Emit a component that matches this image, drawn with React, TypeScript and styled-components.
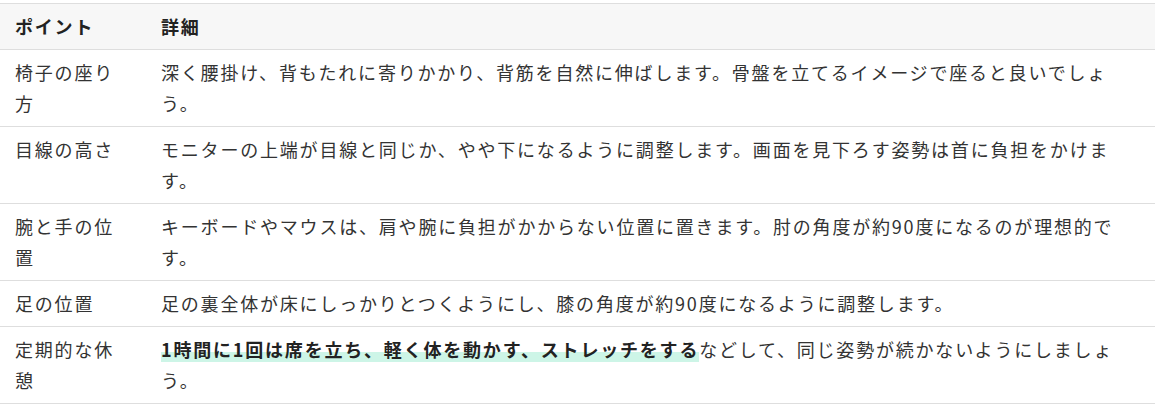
import React from "react";
import styled, { createGlobalStyle } from "styled-components";

const Global = createGlobalStyle`
  html, body { margin: 0; padding: 0; background: #ffffff; }
  body { font-family: "Noto Sans CJK JP", "Noto Sans", sans-serif; color: #333333; }
`;

const Wrap = styled.div`
  padding-top: 3px;
  width: 1155px;
`;

const Table = styled.table`
  width: 100%;
  border-collapse: collapse;
  table-layout: fixed;
  font-size: 18px;
  letter-spacing: 1.8px;
  line-height: 31px;
  border-top: 1px solid #dedede;
`;

const Col = styled.col<{ $w?: number }>`
  width: ${(p) => (p.$w ? `${p.$w}px` : "auto")};
`;

const HeadRow = styled.tr`
  background: #f7f7f7;
  border-bottom: 1px solid #dedede;
`;

const HeadCell = styled.th`
  text-align: left;
  font-weight: 700;
  color: #222222;
  padding: 7px 15px;
  vertical-align: top;
`;

const Row = styled.tr`
  border-bottom: 1px solid #dedede;
`;

const Cell = styled.td`
  padding: 7px 15px;
  vertical-align: top;
  color: #333333;
`;

const Mark = styled.strong`
  font-weight: 700;
  color: #222222;
  background: linear-gradient(transparent 60%, #cdf5e7 60%);
`;

type Item = { point: string; detail: React.ReactNode };

const items: Item[] = [
  {
    point: "椅子の座り方",
    detail:
      "深く腰掛け、背もたれに寄りかかり、背筋を自然に伸ばします。骨盤を立てるイメージで座ると良いでしょう。",
  },
  {
    point: "目線の高さ",
    detail:
      "モニターの上端が目線と同じか、やや下になるように調整します。画面を見下ろす姿勢は首に負担をかけます。",
  },
  {
    point: "腕と手の位置",
    detail:
      "キーボードやマウスは、肩や腕に負担がかからない位置に置きます。肘の角度が約90度になるのが理想的です。",
  },
  {
    point: "足の位置",
    detail: "足の裏全体が床にしっかりとつくようにし、膝の角度が約90度になるように調整します。",
  },
  {
    point: "定期的な休憩",
    detail: (
      <>
        <Mark>1時間に1回は席を立ち、軽く体を動かす、ストレッチをする</Mark>
        などして、同じ姿勢が続かないようにしましょう。
      </>
    ),
  },
];

export default function App() {
  return (
    <>
      <Global />
      <Wrap>
        <Table>
          <colgroup>
            <Col $w={146} />
            <Col />
          </colgroup>
          <thead>
            <HeadRow>
              <HeadCell>ポイント</HeadCell>
              <HeadCell>詳細</HeadCell>
            </HeadRow>
          </thead>
          <tbody>
            {items.map((it) => (
              <Row key={it.point}>
                <Cell>{it.point}</Cell>
                <Cell>{it.detail}</Cell>
              </Row>
            ))}
          </tbody>
        </Table>
      </Wrap>
    </>
  );
}
